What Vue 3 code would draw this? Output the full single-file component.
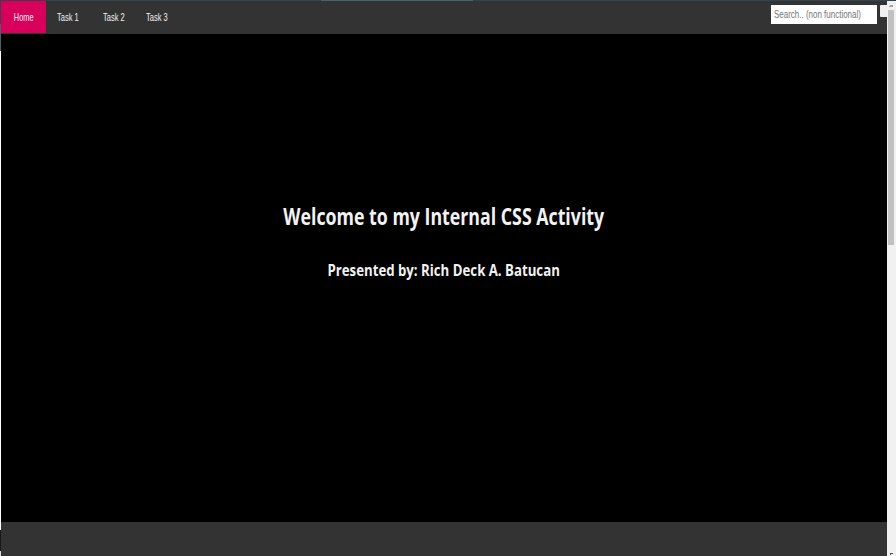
<script setup>
const links = [
  { label: 'Home', cls: 'home' },
  { label: 'Task 1', cls: 't1' },
  { label: 'Task 2', cls: 't2' },
  { label: 'Task 3', cls: 't3' }
]
</script>

<template>
  <div class="window">
    <div class="top-edge"><i></i></div>
    <div class="body">
      <div class="left-edge"><i class="a"></i><i class="b"></i><i class="c"></i><i class="d"></i><i class="e"></i></div>
      <div class="page">
        <nav>
          <a v-for="l in links" :key="l.cls" :class="l.cls"><span>{{ l.label }}</span></a>
          <div class="search"><span>Search.. (non functional)</span></div>
          <div class="button"></div>
        </nav>
        <main>
          <h1><span>Welcome to my Internal CSS Activity</span></h1>
          <h2><span>Presented by: Rich Deck A. Batucan</span></h2>
        </main>
        <footer></footer>
      </div>
      <div class="scrollbar">
        <svg width="9" height="9" viewBox="0 0 9 9"><path d="M3 4H6V5H6V6H2V5H3Z" fill="#a3a3a3" /></svg>
        <div class="thumb"></div>
        <svg class="down" width="9" height="4" viewBox="0 0 9 4"><path d="M3 1H6V2H4V3H3Z" fill="#505050" /></svg>
      </div>
    </div>
  </div>
</template>

<style>
body { overflow: hidden; background: #fff; }
</style>

<style scoped>
.window { width: 896px; height: 556px; display: flex; flex-direction: column; overflow: hidden; font-family: "Open Sans", "Noto Sans", sans-serif; }
.top-edge { height: 1px; background: #33424b; padding-left: 321px; }
.top-edge i { display: block; width: 152px; height: 1px; background: #48626c; }
.body { flex: 1; display: flex; }
.left-edge { width: 1px; display: flex; flex-direction: column; }
.left-edge .a { height: 23px; background: #37444b; }
.left-edge .b { height: 27px; background: #49616b; }
.left-edge .c { height: 479px; background: #fff; }
.left-edge .d { height: 21px; background: #171717; }
.left-edge .e { flex: 1; background: #ddd; }
.page { width: 886px; display: flex; flex-direction: column; }
nav { height: 33px; background: #333; display: flex; overflow: hidden; }
nav a { height: 32px; display: flex; justify-content: center; align-items: center; color: #f2f2f2; font: 11px "Liberation Sans", sans-serif; white-space: nowrap; }
nav a span { transform: scaleX(.68); }
.home { width: 45px; background: #d9005b; }
.home span { transform: scaleX(.67); }
.t1 { width: 43px; }
.t2 { width: 49px; }
.t3 { width: 37px; }
.search { width: 106px; height: 19px; margin: 4px 3px 0 auto; background: #fff; padding-left: 3px; box-sizing: border-box; color: #757575; font: 11px/19px "Liberation Sans", sans-serif; white-space: nowrap; }
.search span { display: inline-block; transform: scaleX(.725); transform-origin: left; }
.button { width: 7px; height: 12px; margin-top: 4px; background: #efefef; border-radius: 1px 0 0 1px; }
main { height: 488px; background: #000; color: #f2f2f2; text-align: center; overflow: hidden; }
h1, h2 { margin: 0; font-weight: 700; white-space: nowrap; }
h1 span, h2 span { display: inline-block; }
h1 { margin-top: 166px; font-size: 23px; line-height: 32px; }
h1 span { transform: scaleX(.772); }
h2 { margin-top: 26px; font-size: 16px; line-height: 24px; }
h2 span { transform: scaleX(.826); }
footer { flex: 1; background: #333; }
.scrollbar { width: 9px; background: #f1f1f1; display: flex; flex-direction: column; }
.scrollbar svg { display: block; }
.thumb { width: 6px; height: 235px; margin-left: 1px; background: #c1c1c1; }
.down { margin-top: auto; }
</style>
